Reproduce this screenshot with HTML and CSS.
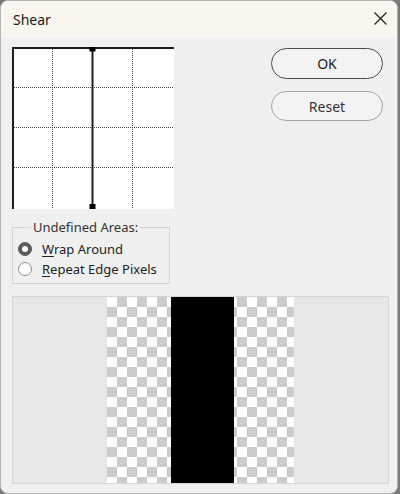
FILE: index.html
```html
<!DOCTYPE html>
<html>
<head>
<meta charset="utf-8">
<link rel="stylesheet" href="styles.css">
</head>
<body>
<div class="window">
  <div class="titlebar">
    <span class="title">Shear</span>
    <svg class="close" width="13" height="13" viewBox="0 0 13 13"><path d="M0.5 0.5L12.5 12.5M12.5 0.5L0.5 12.5" stroke="#222" stroke-width="1.3" fill="none"/></svg>
  </div>
  <div class="content">
    <div class="top">
      <div class="left">
        <svg class="grid" width="162" height="162" viewBox="0 0 162 162">
          <rect x="0" y="0" width="162" height="162" fill="#fff"/>
          <g stroke="#444" stroke-width="1" stroke-dasharray="1 1" fill="none">
            <line x1="40.5" y1="2" x2="40.5" y2="162"/>
            <line x1="120.5" y1="2" x2="120.5" y2="162"/>
            <line x1="2" y1="40.5" x2="162" y2="40.5"/>
            <line x1="2" y1="80.5" x2="162" y2="80.5"/>
            <line x1="2" y1="120.5" x2="162" y2="120.5"/>
          </g>
          <rect x="0" y="0" width="162" height="2" fill="#1e1e1e"/>
          <rect x="0" y="0" width="2" height="162" fill="#1e1e1e"/>
          <rect x="79.5" y="0" width="2" height="162" fill="#1e1e1e"/>
          <rect x="77.5" y="0" width="6" height="4.5" fill="#000"/>
          <rect x="77.5" y="157" width="6" height="5" fill="#000"/>
        </svg>
        <div class="group">
          <span class="legend">Undefined Areas:</span>
          <div class="radio-row">
            <span class="radio checked"></span>
            <span class="label"><u>W</u>rap Around</span>
          </div>
          <div class="radio-row">
            <span class="radio"></span>
            <span class="label"><u>R</u>epeat Edge Pixels</span>
          </div>
        </div>
      </div>
      <div class="buttons">
        <button class="btn default">OK</button>
        <button class="btn">Reset</button>
      </div>
    </div>
    <div class="preview">
      <div class="checker">
        <div class="stripe"></div>
      </div>
    </div>
  </div>
</div>
</body>
</html>
```
FILE: styles.css
```css
html, body {
  margin: 0;
  padding: 0;
}
body {
  background: #7a7a7a;
  width: 400px;
  height: 494px;
  overflow: hidden;
  font-family: "Noto Sans", "Open Sans", sans-serif;
  color: #1a1a1a;
}
.window {
  box-sizing: border-box;
  width: 398px;
  height: 494px;
  background: #f0f0f0;
  border: 1px solid #b4b4b4;
  border-radius: 8px;
  overflow: hidden;
  display: flex;
  flex-direction: column;
}
.titlebar {
  height: 37px;
  flex: none;
  background: #faf6ef;
  display: flex;
  align-items: center;
  padding-left: 12px;
  padding-right: 10px;
}
.title {
  font-size: 14px;
  color: #1a1a1a;
  flex: 1;
  padding-bottom: 1px;
}
.close {
  display: block;
  margin-top: -2px;
}
.content {
  padding: 9px 8px 0 11px;
  display: flex;
  flex-direction: column;
}
.top {
  display: flex;
}
.left {
  width: 162px;
  display: flex;
  flex-direction: column;
}
.grid {
  display: block;
}
.group {
  position: relative;
  margin-top: 18px;
  width: 158px;
  box-sizing: border-box;
  border: 1px solid #d4d4d4;
  padding: 11px 0 4px 5px;
}
.legend {
  position: absolute;
  top: -9px;
  left: 18px;
  padding: 0 2px;
  background: #f0f0f0;
  font-size: 13px;
  line-height: 17px;
  color: #333;
}
.radio-row {
  height: 20px;
  display: flex;
  align-items: center;
  gap: 10px;
}
.radio {
  box-sizing: border-box;
  width: 14px;
  height: 14px;
  border-radius: 50%;
  border: 1px solid #8e8e8e;
  background: #fdfdfd;
  display: flex;
  align-items: center;
  justify-content: center;
}
.radio.checked {
  background: #5c5c5c;
  border-color: #5c5c5c;
}
.radio.checked::after {
  content: "";
  width: 6px;
  height: 6px;
  border-radius: 50%;
  background: #fff;
}
.label {
  font-size: 13px;
  color: #222;
  line-height: 17px;
}
.label u {
  text-decoration-thickness: 1px;
  text-underline-offset: 2px;
}
.buttons {
  margin-left: auto;
  margin-right: 6px;
  margin-top: 1px;
  display: flex;
  flex-direction: column;
  gap: 12px;
}
.btn {
  width: 112px;
  height: 31px;
  box-sizing: border-box;
  border-radius: 16px;
  border: 1px solid #a3a3a3;
  background: #f3f3f3;
  font-family: "Noto Sans", "Open Sans", sans-serif;
  font-size: 14px;
  color: #333;
  padding: 0;
}
.btn.default {
  border: 1.5px solid #4a4a4a;
  color: #222;
}
.btn + .btn {
  height: 30px;
}
.preview {
  margin-top: 12px;
  height: 188px;
  width: 377px;
  box-sizing: border-box;
  background: #e7e7e7;
  border: 1px solid #d6d6d6;
  display: flex;
}
.checker {
  margin-left: 94px;
  width: 187px;
  height: 100%;
  background-color: #fff;
  background-image: conic-gradient(#cccccc 0 25%, #ffffff 0 50%, #cccccc 0 75%, #ffffff 0);
  background-size: 20px 20px;
  display: flex;
}
.stripe {
  margin-left: 64px;
  width: 63px;
  height: 100%;
  background: #000;
}
```
